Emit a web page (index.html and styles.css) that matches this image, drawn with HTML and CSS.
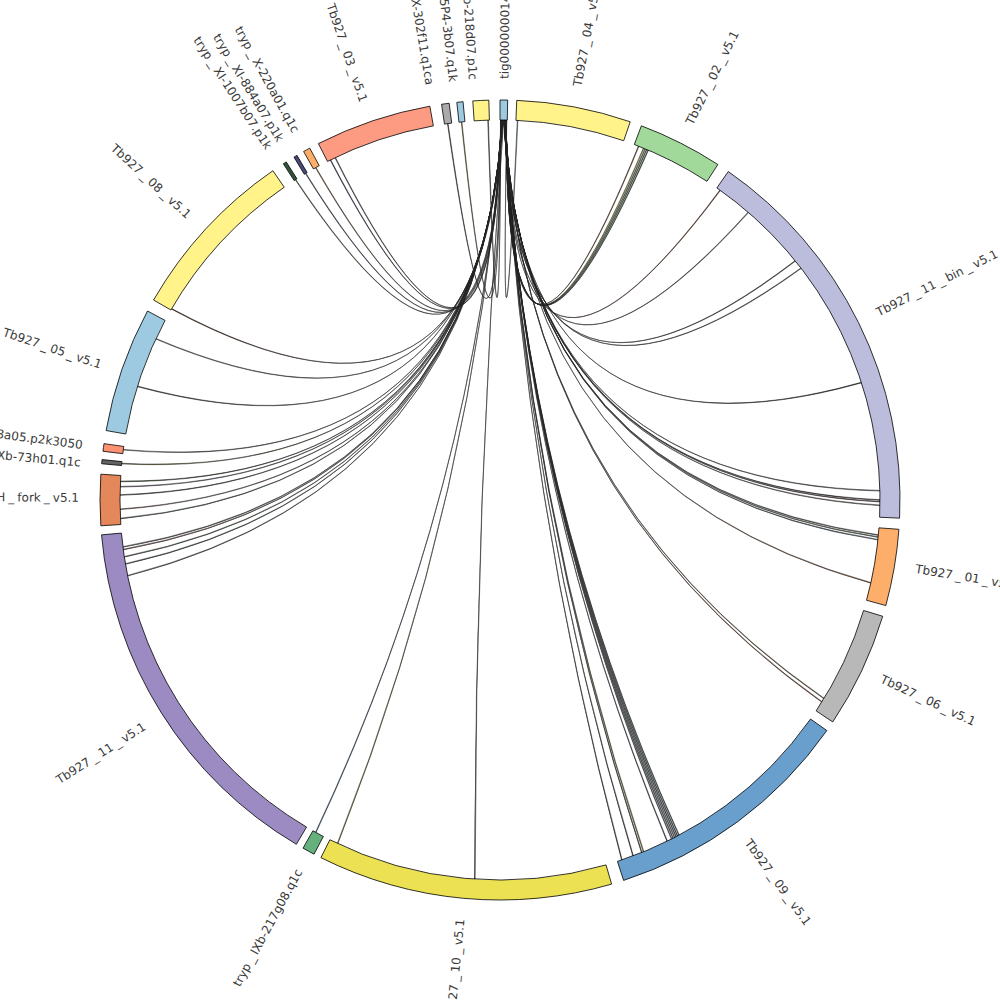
FILE: index.html
```html
<!DOCTYPE html>
<html lang="en">
<head>
<meta charset="utf-8">
<title>Circos plot</title>
<link rel="stylesheet" href="styles.css">
</head>
<body>
<div class="page">
  <svg id="chart" class="chart" viewBox="0 0 1000 1000" width="1000" height="1000" xmlns="http://www.w3.org/2000/svg">
    <g id="links" class="links"></g>
    <g id="ideograms" class="ideograms"></g>
    <g id="labels" class="labels"></g>
  </svg>
</div>
<script src="script.js"></script>
</body>
</html>
```

FILE: styles.css
```css
html, body {
  margin: 0;
  padding: 0;
  background: #ffffff;
  overflow: hidden;
}
.page {
  width: 1000px;
  height: 1000px;
  overflow: hidden;
}
.chart {
  display: block;
}
.ideogram {
  stroke: #000000;
  stroke-width: 0.8;
  stroke-linejoin: miter;
}
.link {
  stroke: #222222;
  stroke-width: 0.5;
  stroke-linejoin: round;
}
.label {
  font-family: "DejaVu Sans", "Liberation Sans", sans-serif;
  font-size: 12px;
  fill: #3a3a3a;
}
```

FILE: script.js
```js
(function () {
  var NS = 'http://www.w3.org/2000/svg';
  var CX = 500, CY = 500, RO = 400, RI = 380, RL = 421, RB = 25;

  function P(a, r) {
    var t = a * Math.PI / 180;
    return [CX + r * Math.sin(t), CY - r * Math.cos(t)];
  }
  function f(p) { return p[0].toFixed(2) + ',' + p[1].toFixed(2); }

  var segments = [
    { name: 'tig000000014', s: 0.0, e: 1.1, c: '#9ecae1', la: 0.6 },
    { name: 'Tb927_04_v5.1', s: 2.4, e: 19.0, c: '#fff38a', la: 10.6 },
    { name: 'Tb927_02_v5.1', s: 20.7, e: 33.0, c: '#a1d99b', la: 26.7 },
    { name: 'Tb927_11_bin_v5.1', s: 34.8, e: 92.6, c: '#bcbddc', la: 63.6 },
    { name: 'Tb927_01_v5.1', s: 94.2, e: 105.3, c: '#fdae6b', la: 99.4 },
    { name: 'Tb927_06_v5.1', s: 106.9, e: 123.7, c: '#b8b8b8', la: 115.1 },
    { name: 'Tb927_09_v5.1', s: 125.2, e: 162.0, c: '#699fcd', la: 144.0 },
    { name: 'Tb927_10_v5.1', s: 163.8, e: 206.6, c: '#ebe152', la: 185.4 },
    { name: 'tryp_IXb-217g08.q1c', s: 207.7, e: 209.5, c: '#66b07c', la: 208.5 },
    { name: 'Tb927_11_v5.1', s: 210.6, e: 265.0, c: '#9b8bc2', la: 237.6 },
    { name: 'Tb927_BES_H_fork_v5.1', s: 266.3, e: 273.7, c: '#e4875a', la: 270.3 },
    { name: 'tryp_Xb-73h01.q1c', s: 275.2, e: 275.8, c: '#636363', la: 275.1 },
    { name: 'tryp_X-148a05.p2k3050', s: 277.0, e: 278.1, c: '#fc9272', la: 277.5 },
    { name: 'Tb927_05_v5.1', s: 280.0, e: 298.2, c: '#9ecae1', la: 288.7 },
    { name: 'Tb927_08_v5.1', s: 300.0, e: 325.4, c: '#fff38a', la: 312.4 },
    { name: 'tryp_XI-1007b07.p1k', s: 327.2, e: 327.7, c: '#31553a', la: 326.7 },
    { name: 'tryp_XI-884a07.p1k', s: 329.0, e: 329.5, c: '#4a4a78', la: 328.6 },
    { name: 'tryp_X-220a01.q1c', s: 330.6, e: 331.6, c: '#fdae6b', la: 331.0 },
    { name: 'Tb927_03_v5.1', s: 333.0, e: 349.9, c: '#fc9a82', la: 341.1 },
    { name: 'tryp_X-302f11.q1ca', s: 351.6, e: 352.7, c: '#aaaaaa', la: 350.4 },
    { name: 'tryp_X-5P4-3b07.q1k', s: 353.8, e: 354.7, c: '#9ecae1', la: 353.6 },
    { name: 'tryp_IXb-218d07.p1c', s: 356.1, e: 358.4, c: '#fff38a', la: 356.3 }
  ];

  // link targets (angle, colour); the other end of every link is on tig000000014
  var links = [
    [2.65, '#7aaaca'],
    [21.4, '#8c4a2f'], [22.2, '#d9d94a'], [22.45, '#6a9a50'], [22.7, '#5a6a3a'], [22.95, '#2f5f3f'],
    [35.4, '#8c4a2f'], [40.8, '#555555'], [51.0, '#444444'], [52.4, '#666666'], [72.0, '#333333'],
    [88.6, '#77708a'], [90.0, '#333333'], [90.25, '#6b4a3a'], [90.8, '#888888'],
    [95.3, '#666666'], [95.6, '#7a8a6a'], [96.0, '#4a6a8a'], [102.6, '#8c5a3a'],
    [121.5, '#7a6a3a'], [122.1, '#8c4a3a'],
    [151.9, '#555555'], [152.15, '#2a6a4a'], [152.4, '#4a4a7a'], [152.65, '#777777'], [152.9, '#3a5a6a'], [153.15, '#666666'],
    [153.9, '#5a4a7a'], [157.8, '#8a8a2a'], [158.1, '#333333'], [159.5, '#4a2a2a'], [161.3, '#3a2a2a'],
    [183.8, '#333333'], [205.3, '#8a7a2a'], [209.0, '#3a6a9a'],
    [258.5, '#555555'], [260.3, '#2a4a2a'], [261.4, '#5a6a5a'], [262.5, '#8a5a4a'], [262.9, '#666666'],
    [267.2, '#4a6a5a'], [268.6, '#8a5a4a'], [270.75, '#555555'], [272.0, '#6a5a8a'], [272.8, '#3a5a3a'],
    [275.5, '#7a6a2a'], [277.6, '#6a7a6a'],
    [287.4, '#555555'], [295.1, '#777777'], [300.2, '#6a3a2a'],
    [327.45, '#3a6a3a'], [329.25, '#3a3a6a'], [331.0, '#8a5a3a'], [333.5, '#2a2a6a'], [334.3, '#555555'],
    [352.1, '#444444'], [354.2, '#8a8a3a'], [358.2, '#555555']
  ];

  function el(name, attrs) {
    var e = document.createElementNS(NS, name);
    for (var k in attrs) e.setAttribute(k, attrs[k]);
    return e;
  }

  function ribbon(a0, a1, b0, b1) {
    var ma = (a0 + a1) / 2, mb = (b0 + b1) / 2;
    var d = mb - ma;
    if (d < 0) d += 360;
    var mid = d <= 180 ? ma + d / 2 : ma + d / 2 + 180;
    var C = f(P(mid, RB));
    return 'M' + f(P(a0, RI)) +
      'A' + RI + ',' + RI + ' 0 0 1 ' + f(P(a1, RI)) +
      'Q' + C + ' ' + f(P(b0, RI)) +
      'A' + RI + ',' + RI + ' 0 0 1 ' + f(P(b1, RI)) +
      'Q' + C + ' ' + f(P(a0, RI)) + 'Z';
  }

  var gl = document.getElementById('links');
  links.forEach(function (l) {
    var t = l[0];
    var slot = 1.02 - (t / 360) * 0.94;
    var attrs = { 'class': 'link', d: ribbon(slot - 0.012, slot + 0.012, t - 0.05, t + 0.05), fill: l[1] };
    if (t < 3) { attrs.stroke = '#5a8aaa'; }
    gl.appendChild(el('path', attrs));
  });

  function setLabel(t, name) {
    var parts = name.split('_');
    t.appendChild(document.createTextNode(parts[0]));
    for (var i = 1; i < parts.length; i++) {
      var u = el('tspan', { dx: '3' });
      u.textContent = '_';
      t.appendChild(u);
      var p = el('tspan', { dx: '3' });
      p.textContent = parts[i];
      t.appendChild(p);
    }
  }

  var gi = document.getElementById('ideograms');
  var glb = document.getElementById('labels');
  segments.forEach(function (s) {
    var large = (s.e - s.s) > 180 ? 1 : 0;
    var d = 'M' + f(P(s.s, RO)) +
      'A' + RO + ',' + RO + ' 0 ' + large + ' 1 ' + f(P(s.e, RO)) +
      'L' + f(P(s.e, RI)) +
      'A' + RI + ',' + RI + ' 0 ' + large + ' 0 ' + f(P(s.s, RI)) + 'Z';
    gi.appendChild(el('path', { 'class': 'ideogram', d: d, fill: s.c }));

    var pt = P(s.la, RL);
    var right = s.la < 180;
    var rot = right ? s.la - 90 : s.la - 270;
    var t = el('text', {
      'class': 'label',
      transform: 'translate(' + f(pt) + ') rotate(' + rot.toFixed(2) + ')',
      'text-anchor': right ? 'start' : 'end',
      'dominant-baseline': 'central'
    });
    setLabel(t, s.name);
    glb.appendChild(t);
  });
})();
```
